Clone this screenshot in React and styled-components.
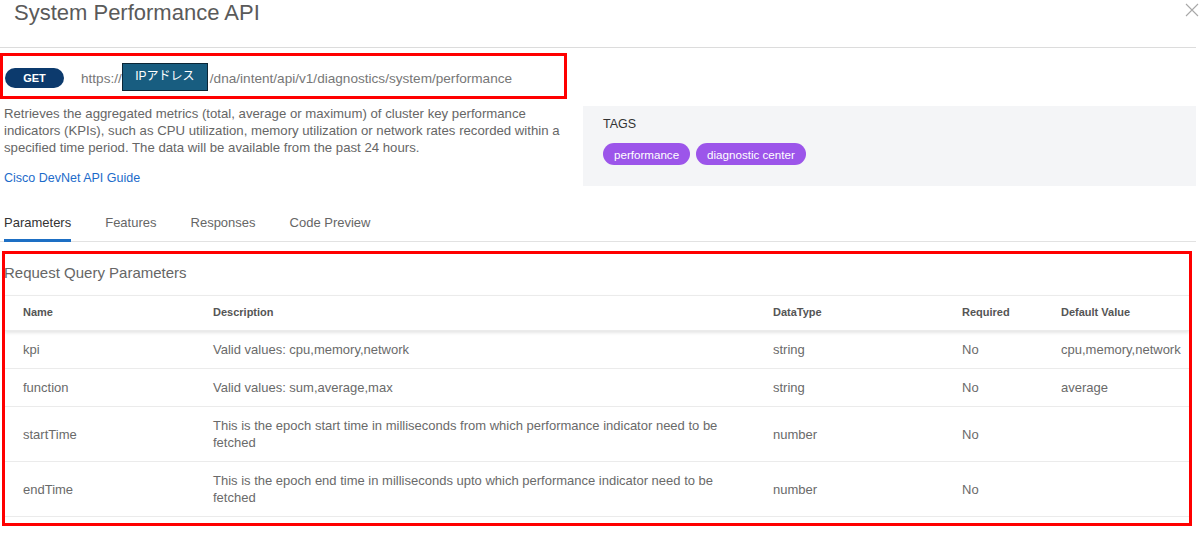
import React from 'react';
import styled, { createGlobalStyle } from 'styled-components';

const GlobalStyle = createGlobalStyle`
	* { box-sizing: border-box; }
	body {
		margin: 0;
		background: #fff;
		font-family: 'Liberation Sans', Arial, sans-serif;
		color: #666;
	}
`;

const Page = styled.div`
	display: flex;
	width: 1200px;
	height: 533px;
	overflow: hidden;
	background: #fff;
`;

const Main = styled.div`
	flex: 1;
	min-width: 0;
`;

const ScrollTrack = styled.div`
	width: 4px;
	flex-shrink: 0;
	background: repeating-linear-gradient(
		to bottom,
		transparent 0,
		transparent 26px,
		#d6d6d6 26px,
		#d6d6d6 27px
	);
	background-size: 3px 19px;
	background-repeat: repeat-y;
	background-position: right 8px;
`;

const Header = styled.div`
	display: flex;
	justify-content: space-between;
	align-items: flex-start;
	height: 48px;
	border-bottom: 1px solid #dcdcdc;
`;

const Title = styled.h1`
	margin: 0;
	padding: 0 0 0 14px;
	font-size: 22px;
	line-height: 26px;
	font-weight: 400;
	color: #5a5a5a;
`;

const Close = styled.button`
	border: 0;
	background: none;
	padding: 0;
	margin: 3px -3px 0 0;
	width: 14px;
	height: 14px;
	display: flex;
`;

const UrlBox = styled.div`
	display: flex;
	align-items: center;
	width: 567px;
	height: 46px;
	margin-top: 5px;
	padding-left: 2px;
	padding-top: 4px;
	border: 3px solid #f00;
	font-size: 13.6px;
	color: #777;
`;

const Method = styled.span`
	display: inline-flex;
	align-items: center;
	justify-content: center;
	width: 59px;
	height: 20px;
	border-radius: 10px;
	background: #0c3a6d;
	color: #fff;
	font-size: 11px;
	font-weight: 700;
	margin-right: 17px;
`;

const IpBox = styled.span`
	display: inline-flex;
	align-items: center;
	justify-content: center;
	width: 86px;
	height: 28px;
	margin: -3px 2px 0 0;
	background: #185d80;
	border: 1px solid #0b2636;
	color: #fff;
	font-size: 12px;
	font-family: 'Liberation Sans', 'Noto Sans CJK JP', sans-serif;
	padding-bottom: 5px;
`;

const InfoRow = styled.div`
	display: flex;
	margin-top: 6px;
`;

const InfoText = styled.div`
	width: 583px;
	padding-left: 4px;
	padding-right: 14px;
`;

const Description = styled.p`
	margin: 0;
	font-size: 13.2px;
	line-height: 17px;
	color: #666;
`;

const GuideLink = styled.a`
	display: block;
	margin-top: 14px;
	font-size: 12.5px;
	line-height: 17px;
	color: #1c6bca;
	text-decoration: none;
`;

const TagsPanel = styled.div`
	flex: 1;
	height: 80px;
	margin-top: 1px;
	padding: 10px 20px;
	background: #f4f5f7;
`;

const TagsLabel = styled.div`
	font-size: 12.5px;
	line-height: 16px;
	color: #333;
`;

const TagList = styled.div`
	display: flex;
	gap: 6px;
	margin-top: 11px;
`;

const Tag = styled.span`
	display: inline-flex;
	align-items: center;
	height: 22px;
	padding: 0 11px;
	border-radius: 11px;
	background: #9c55ea;
	color: #fff;
	font-size: 11.6px;
`;

const Tabs = styled.div`
	display: flex;
	gap: 34px;
	margin-top: 18px;
	padding-left: 4px;
	border-bottom: 1px solid #e2e2e2;
`;

const Tab = styled.div`
	padding: 9px 0 8px;
	margin-bottom: -1px;
	font-size: 13px;
	line-height: 17px;
	color: ${({ active }) => (active ? '#333' : '#666')};
	border-bottom: 3px solid ${({ active }) => (active ? '#1d6fc4' : 'transparent')};
`;

const ParamsBox = styled.div`
	width: 1190px;
	height: 275px;
	margin: 9px 0 0 2px;
	border: 3px solid #f00;
	padding-top: 9px;
	overflow: hidden;
`;

const SectionTitle = styled.div`
	font-size: 15px;
	line-height: 20px;
	color: #666;
	margin-left: -1px;
`;

const Table = styled.div`
	margin-top: 12px;
`;

const Row = styled.div`
	display: grid;
	grid-template-columns: 190px 560px 189px 99px 1fr;
	align-items: center;
	border-top: ${({ head }) => (head ? '1px solid #ebebeb' : '0')};
	border-bottom: 1px solid #ebebeb;
	box-shadow: ${({ head }) => (head ? '0 2px 3px rgba(0, 0, 0, 0.1)' : 'none')};
	position: relative;
`;

const Cell = styled.div`
	padding: ${({ head }) => (head ? '8px 20px 9px 18px' : '10px 20px 10px 18px')};
	font-size: ${({ head }) => (head ? '11px' : '13px')};
	font-weight: ${({ head }) => (head ? 700 : 400)};
	line-height: 17px;
	color: ${({ head }) => (head ? '#555' : '#6a6a6a')};
	white-space: ${({ wrap }) => (wrap ? 'normal' : 'nowrap')};
	&:last-child {
		padding-right: 0;
	}
`;

const columns = ['Name', 'Description', 'DataType', 'Required', 'Default Value'];

const params = [
	['kpi', 'Valid values: cpu,memory,network', 'string', 'No', 'cpu,memory,network'],
	['function', 'Valid values: sum,average,max', 'string', 'No', 'average'],
	[
		'startTime',
		'This is the epoch start time in milliseconds from which performance indicator need to be fetched',
		'number',
		'No',
		'',
	],
	[
		'endTime',
		'This is the epoch end time in milliseconds upto which performance indicator need to be fetched',
		'number',
		'No',
		'',
	],
];

const CloseIcon = () => (
	<svg width="14" height="14" viewBox="0 0 14 14">
		<path d="M1 1 L13 13 M13 1 L1 13" stroke="#a8a8a8" strokeWidth="1.1" fill="none" />
	</svg>
);

const App = () => (
	<Page>
		<GlobalStyle />
		<Main>
			<Header>
				<Title>System Performance API</Title>
				<Close aria-label="close">
					<CloseIcon />
				</Close>
			</Header>

			<UrlBox>
				<Method>GET</Method>
				<span>https://</span>
				<IpBox>IPアドレス</IpBox>
				<span>/dna/intent/api/v1/diagnostics/system/performance</span>
			</UrlBox>

			<InfoRow>
				<InfoText>
					<Description>
						Retrieves the aggregated metrics (total, average or maximum) of cluster key performance
						indicators (KPIs), such as CPU utilization, memory utilization or network rates recorded within a
						specified time period. The data will be available from the past 24 hours.
					</Description>
					<GuideLink href="#">Cisco DevNet API Guide</GuideLink>
				</InfoText>
				<TagsPanel>
					<TagsLabel>TAGS</TagsLabel>
					<TagList>
						<Tag>performance</Tag>
						<Tag>diagnostic center</Tag>
					</TagList>
				</TagsPanel>
			</InfoRow>

			<Tabs>
				<Tab active>Parameters</Tab>
				<Tab>Features</Tab>
				<Tab>Responses</Tab>
				<Tab>Code Preview</Tab>
			</Tabs>

			<ParamsBox>
				<SectionTitle>Request Query Parameters</SectionTitle>
				<Table>
					<Row head>
						{columns.map((c) => (
							<Cell head key={c}>
								{c}
							</Cell>
						))}
					</Row>
					{params.map((p) => (
						<Row key={p[0]}>
							{p.map((v, i) => (
								<Cell key={i} wrap={i === 1 ? 1 : 0}>
									{v}
								</Cell>
							))}
						</Row>
					))}
				</Table>
			</ParamsBox>
		</Main>
		<ScrollTrack />
	</Page>
);

export default App;
